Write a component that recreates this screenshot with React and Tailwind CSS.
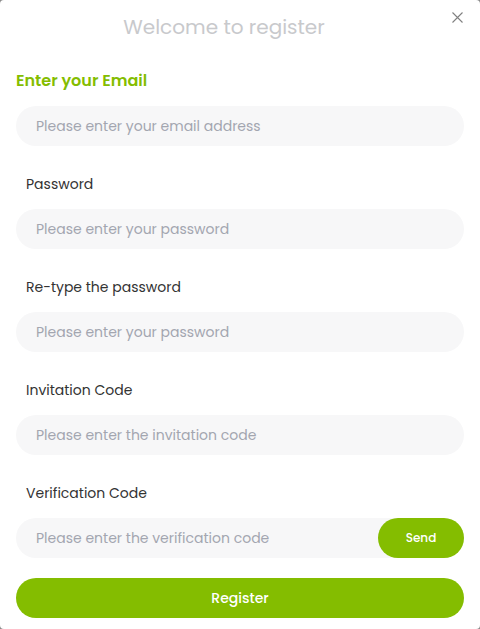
import React from "react";

const font = { fontFamily: "Poppins, 'Open Sans', 'Noto Sans', sans-serif" };

function Field({ label, placeholder, first }) {
  return (
    <div className="flex flex-col">
      <div className={first ? "h-[30px] flex items-center text-[16px] font-semibold text-[#84bd00]" : "h-[20px] pl-[10px] flex items-center text-[14px] text-[#333333]"}>
        {label}
      </div>
      <div className={first ? "h-[10px]" : "h-[15px]"} />
      <input
        className="h-[40px] w-full rounded-full bg-[#f7f7f8] px-[20px] text-[14px] outline-none placeholder:text-[#a3a6b0]"
        placeholder={placeholder}
        style={font}
      />
    </div>
  );
}

export default function App() {
  return (
    <div className="w-[480px] h-[629px] bg-[#8a8a8a]" style={font}>
      <div className="relative w-full h-full bg-white rounded-[4px] px-[16px] flex flex-col">
        <div className="h-[54px] flex items-center justify-center pr-[32px] text-[20px] text-[#c8c9cc]">
          Welcome to register
        </div>
        <button className="absolute right-[17px] top-[11px] w-[12px] h-[12px] flex items-center justify-center text-[#777]">
          <svg width="11" height="11" viewBox="0 0 11 11" fill="none" stroke="#808080" strokeWidth="1.1">
            <path d="M0.5 0.5 L10.5 10.5 M10.5 0.5 L0.5 10.5" />
          </svg>
        </button>
        <div className="h-[12px]" />
        <Field first label="Enter your Email" placeholder="Please enter your email address" />
        <div className="h-[28px]" />
        <Field label="Password" placeholder="Please enter your password" />
        <div className="h-[28px]" />
        <Field label="Re-type the password" placeholder="Please enter your password" />
        <div className="h-[28px]" />
        <Field label="Invitation Code" placeholder="Please enter the invitation code" />
        <div className="h-[28px]" />
        <div className="flex flex-col">
          <div className="h-[20px] pl-[10px] flex items-center text-[14px] text-[#333333]">Verification Code</div>
          <div className="h-[15px]" />
          <div className="flex h-[40px] rounded-full bg-[#f7f7f8]">
            <input
              className="flex-1 min-w-0 h-full bg-transparent px-[20px] text-[14px] outline-none placeholder:text-[#a3a6b0]"
              placeholder="Please enter the verification code"
              style={font}
            />
            <button className="w-[86px] h-full rounded-full bg-[#84bd00] text-white text-[12px] font-medium">
              Send
            </button>
          </div>
        </div>
        <div className="h-[20px]" />
        <button className="h-[40px] w-full rounded-full bg-[#84bd00] text-white text-[14px] font-medium">
          Register
        </button>
      </div>
    </div>
  );
}
